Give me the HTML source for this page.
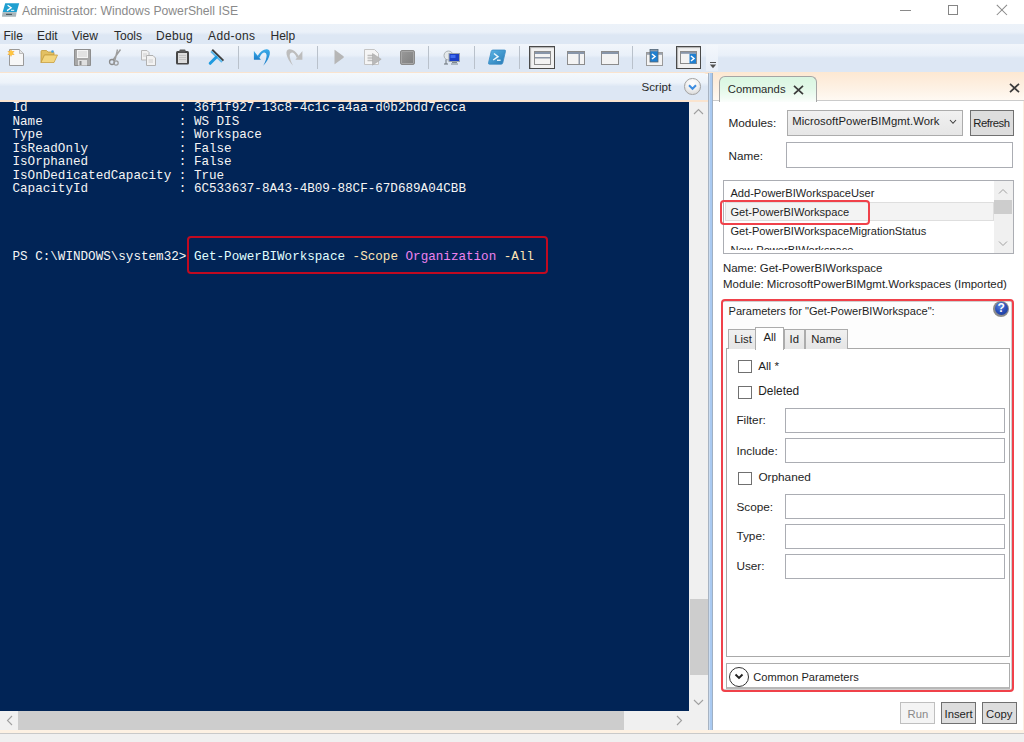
<!DOCTYPE html>
<html><head><meta charset="utf-8">
<style>
*{margin:0;padding:0;box-sizing:border-box}
html,body{width:1024px;height:742px;overflow:hidden;background:#fff;font-family:"Liberation Sans",sans-serif;font-size:11.3px;color:#1e1e1e}
.a{position:absolute}
.t{position:absolute;white-space:pre;line-height:1}
#title{left:0;top:0;width:1024px;height:24px;background:#fff}
#menu{left:0;top:24px;width:1024px;height:20px;background:linear-gradient(#ecf2f9 0,#ebf1f9 40%,#dde7f4 55%,#dde7f4 100%)}
#tool{left:0;top:44px;width:1024px;height:28px;background:linear-gradient(#f2f6fb 0,#e9f0f9 40%,#dde7f4 50%,#dde7f4 100%)}
#peach1{left:0;top:71.5px;width:713px;height:2px;background:#fae4cf}
#shdr{left:0;top:73px;width:707.5px;height:27px;background:linear-gradient(#f4f8fc 0,#edf3fa 35%,#dde7f4 50%,#dde7f4 100%);border-radius:0 5px 0 0}
#peach2{left:0;top:100px;width:708px;height:2px;background:#fae4cf}
#editor{left:0;top:101.5px;width:689px;height:609.5px;background:#012456;overflow:hidden}
.mono{font-family:"Liberation Mono",monospace;font-size:12.6px;color:#f5f5f5;white-space:pre;line-height:13.57px}
#vsb{left:689px;top:101.5px;width:19px;height:609.5px;background:#f0f0f0}
#hsb{left:0;top:711px;width:708px;height:18.5px;background:#f0f0f0}
#split{left:708px;top:73px;width:5px;height:657px;background:linear-gradient(90deg,#a7b3c2 0,#a7b3c2 20%,#c9dcf2 20%,#c9dcf2 45%,#a9c9f0 45%,#a9c9f0 80%,#9fb0c4 80%)}
#cmd{left:713px;top:72px;width:311px;height:658px;background:#fff}
#cmdhdr{left:713px;top:71.5px;width:311px;height:29px;background:linear-gradient(#fde8d2,#fdf1e4 55%,#fffaf4)}
#status{left:0;top:733px;width:1024px;height:9px;background:#f0f0f0;border-top:1px solid #c9c9c9}
#peach3{left:0;top:729.5px;width:1024px;height:3.5px;background:#fdf1e3}
.lbl{position:absolute;white-space:pre;line-height:1;font-size:11.4px;color:#1e1e1e}
.tb{position:absolute;background:#fff;border:1px solid #abadb3}
.cb{position:absolute;width:14px;height:13px;background:#fff;border:1px solid #707070}
</style></head><body>
<div id="title" class="a">
<svg class="a" style="left:0;top:0" width="22" height="20" viewBox="0 0 22 20">
<path d="M5.2 3.2 H19.2 L16.6 12.3 H2.6 Z" fill="#1f9fd0"/>
<path d="M2.6 12.3 H16.6 L15.9 16.7 H2.3 Q1.8 16.7 2.0 16.0 Z" fill="#a9b6bb"/>
<path d="M7.6 5.2 L11.2 7.8 L7.0 10.6" stroke="#fff" stroke-width="1.3" fill="none"/>
<rect x="11" y="9.8" width="3.2" height="1.2" fill="#cfeaf5"/>
<rect x="6" y="13.8" width="6" height="1.2" fill="#4d5a60"/>
</svg>
<div class="t" style="left:22px;top:5px;font-size:12.2px;color:#8a8a8a">Administrator: Windows PowerShell ISE</div>
<div class="a" style="left:900px;top:9.5px;width:11px;height:1px;background:#8a8a8a"></div>
<div class="a" style="left:948px;top:5px;width:10px;height:10px;border:1px solid #858585"></div>
<svg class="a" style="left:996px;top:4px" width="12" height="12" viewBox="0 0 12 12"><path d="M0.8 0.8 L11 11 M11 0.8 L0.8 11" stroke="#8a8a8a" stroke-width="1.05"/></svg>
</div>
<div id="menu" class="a">
<div class="t" style="left:3.5px;top:6px;font-size:12px;color:#2a2a2a">File</div>
<div class="t" style="left:37px;top:6px;font-size:12px;color:#2a2a2a">Edit</div>
<div class="t" style="left:72px;top:6px;font-size:12px;color:#2a2a2a">View</div>
<div class="t" style="left:114px;top:6px;font-size:12px;color:#2a2a2a">Tools</div>
<div class="t" style="left:156px;top:6px;font-size:12px;color:#2a2a2a;letter-spacing:0.3px">Debug</div>
<div class="t" style="left:208px;top:6px;font-size:12px;color:#2a2a2a;letter-spacing:0.4px">Add-ons</div>
<div class="t" style="left:270.5px;top:6px;font-size:12px;color:#2a2a2a">Help</div>
</div>
<div id="tool" class="a">
<!-- new -->
<svg class="a" style="left:6px;top:4px" width="20" height="19" viewBox="0 0 20 19">
<path d="M3.5 1.5 H13.5 L17.5 5.5 V17.5 H3.5 Z" fill="#f7f7f7" stroke="#9a9a9a" stroke-width="1"/>
<path d="M13.5 1.5 V5.5 H17.5" fill="#e6e6e6" stroke="#b0b0b0" stroke-width="0.8"/>
<path d="M5 1 L5.9 3.6 L8.6 2.9 L6.9 5 L8.6 7.1 L5.9 6.4 L5 9 L4.1 6.4 L1.4 7.1 L3.1 5 L1.4 2.9 L4.1 3.6 Z" fill="#f5a623"/>
<circle cx="5" cy="5" r="2.2" fill="#ffc640"/>
</svg>
<!-- open -->
<svg class="a" style="left:40px;top:5px" width="19" height="15" viewBox="0 0 19 15">
<path d="M1 2.5 Q1 1.5 2 1.5 H6.5 L8 3 H13 Q14 3 14 4 V6 H4.5 L1 13.5 Z" fill="#e2c063" stroke="#c49a38" stroke-width="0.8"/>
<path d="M4.5 6 H17.5 L14 13.5 H1 Z" fill="#f2d57e" stroke="#c9a040" stroke-width="0.8"/>
<circle cx="12.5" cy="2.5" r="1.3" fill="#4aa0e0"/>
</svg>
<!-- save -->
<svg class="a" style="left:74px;top:5px" width="17" height="17" viewBox="0 0 17 17">
<path d="M0.5 0.5 H16.5 V16.5 H0.5 Z" fill="#a8a8a8" stroke="#8e8e8e" stroke-width="1"/>
<rect x="3" y="1" width="11" height="8" fill="#f4f4f4"/>
<path d="M4 3 H13 M4 5 H13 M4 7 H13" stroke="#c8c8c8" stroke-width="0.8"/>
<rect x="4" y="11" width="9" height="5.5" fill="#e0e0e0"/>
<rect x="5.5" y="12" width="2" height="4" fill="#8a8a8a"/>
</svg>
<!-- cut -->
<svg class="a" style="left:108px;top:5px" width="14" height="17" viewBox="0 0 14 17">
<path d="M12.5 0.5 L5 11 M9.5 0.5 L7 11" stroke="#9c9c9c" stroke-width="1.4" fill="none"/>
<circle cx="4" cy="13" r="2.5" fill="none" stroke="#8a8a8a" stroke-width="1.3"/>
<circle cx="8" cy="14" r="2.2" fill="none" stroke="#9a9a9a" stroke-width="1.2"/>
</svg>
<!-- copy -->
<svg class="a" style="left:141px;top:6px" width="16" height="16" viewBox="0 0 16 16">
<path d="M0.5 0.5 H6 L8 2.5 V10 H0.5 Z" fill="#f2f2f2" stroke="#b8b8b8" stroke-width="1"/>
<path d="M5.5 5.5 H12 L14.5 8 V15.5 H5.5 Z" fill="#f2f2f2" stroke="#b0b0b0" stroke-width="1"/>
<path d="M2 4 H6 M2 6 H6 M7.5 10 H12 M7.5 12 H12" stroke="#c4c4c4" stroke-width="0.8"/>
</svg>
<!-- paste -->
<svg class="a" style="left:175px;top:5px" width="15" height="16" viewBox="0 0 15 16">
<rect x="1" y="2" width="13" height="13.5" rx="1.5" fill="#474747"/>
<rect x="3" y="4" width="9" height="10" fill="#dcdcdc"/>
<path d="M4 6.5 H11 M4 8.5 H11 M4 10.5 H11" stroke="#bdbdbd" stroke-width="0.8"/>
<rect x="4.5" y="0.5" width="6" height="3" rx="0.8" fill="#5a5a5a"/>
</svg>
<!-- clear -->
<svg class="a" style="left:207px;top:4px" width="18" height="18" viewBox="0 0 18 18">
<path d="M5.2 1.8 L16.4 12.6" stroke="#404040" stroke-width="2"/>
<path d="M4 3.4 L15 14" stroke="#5db8ea" stroke-width="2"/>
<path d="M9.2 9.2 L3.2 15.3" stroke="#1f9be0" stroke-width="3" stroke-linecap="round"/>
</svg>
<div class="a" style="left:238px;top:2px;width:1px;height:23px;background:#b9c1cb"></div>
<!-- undo -->
<svg class="a" style="left:248px;top:0" width="60" height="26" viewBox="0 0 60 26">
<defs><linearGradient id="ug" x1="0" y1="0" x2="0" y2="1"><stop offset="0" stop-color="#3aaae8"/><stop offset="1" stop-color="#1a7cc8"/></linearGradient></defs>
<path d="M5.9 7 L5.9 15.8 L12.9 15.8 Z" fill="url(#ug)"/>
<path d="M9.3 12.2 Q14 4.8 19 5.2 Q22.6 5.6 21.7 10.5 Q20.6 16 15.2 21.8 Q18.8 15 18.6 11 Q18.4 8.3 16 8.5 Q13.5 8.8 11.6 13.8 Z" fill="url(#ug)"/>
<g transform="translate(60.3,0) scale(-1,1)" fill="#bdbdbd">
<path d="M5.9 7 L5.9 15.8 L12.9 15.8 Z"/>
<path d="M9.3 12.2 Q14 4.8 19 5.2 Q22.6 5.6 21.7 10.5 Q20.6 16 15.2 21.8 Q18.8 15 18.6 11 Q18.4 8.3 16 8.5 Q13.5 8.8 11.6 13.8 Z"/>
</g>
</svg>
<div class="a" style="left:316.5px;top:2px;width:1px;height:23px;background:#b9c1cb"></div>
<!-- run -->
<svg class="a" style="left:333px;top:5px" width="12" height="16" viewBox="0 0 12 16">
<path d="M1.5 1 Q1 0.5 2 1 L10.5 7.2 Q11.2 8 10.5 8.8 L2 15 Q1 15.5 1.5 15 Z" fill="#b6b6b6"/>
</svg>
<!-- run selection -->
<svg class="a" style="left:364px;top:5px" width="18" height="17" viewBox="0 0 18 17">
<path d="M0.5 0.5 H10.5 L14.5 4.5 V15.5 H0.5 Z" fill="#f5f5f5" stroke="#c4c4c4" stroke-width="1"/>
<path d="M3.5 6.5 H11 M3.5 9 H11 M3.5 11.5 H11" stroke="#bdbdbd" stroke-width="1.3"/>
<path d="M8.5 4.5 L17.2 10.2 L8.5 16.2 Z" fill="#b9b9b9" stroke="#a9a9a9" stroke-width="0.6"/>
</svg>
<!-- stop -->
<div class="a" style="left:400px;top:6px;width:15px;height:15px;background:linear-gradient(135deg,#9a9a9a,#7f7f7f);border:1px solid #8a8a8a;border-radius:2px;box-shadow:inset 0 0 0 1px #a6a6a6"></div>
<div class="a" style="left:428px;top:2px;width:1px;height:23px;background:#b9c1cb"></div>
<!-- remote -->
<svg class="a" style="left:443px;top:6px" width="18" height="15" viewBox="0 0 18 15">
<circle cx="5.5" cy="5.5" r="4.5" fill="#e4e8ea" stroke="#a8b0b4" stroke-width="1"/>
<rect x="6" y="3.5" width="10.5" height="8" fill="#1b3fc6" stroke="#9aa3aa" stroke-width="1"/>
<rect x="7.5" y="5" width="5" height="3" fill="#3f6cf0"/>
<path d="M9 12.5 H14 M8 14 H15" stroke="#7d8890" stroke-width="1"/>
<path d="M3 9.5 V14 M1 14 H5" stroke="#6b7278" stroke-width="1"/>
</svg>
<div class="a" style="left:474px;top:2px;width:1px;height:23px;background:#b9c1cb"></div>
<!-- ps -->
<svg class="a" style="left:487px;top:4px" width="20" height="18" viewBox="0 0 20 18">
<defs><linearGradient id="psg" x1="0" y1="0" x2="1" y2="1"><stop offset="0" stop-color="#5cb6e6"/><stop offset="1" stop-color="#2679b5"/></linearGradient></defs>
<path d="M6 2 H17.5 Q18.8 2 18.5 3.3 L15.8 14.8 Q15.5 16.2 14.2 16.2 H2.5 Q1.2 16.2 1.5 14.9 L4.2 3.4 Q4.5 2 6 2 Z" fill="url(#psg)" stroke="#3b8cc4" stroke-width="0.8"/>
<path d="M7 5.5 L11 8.7 L6.2 12" stroke="#eaf6fc" stroke-width="1.5" fill="none"/>
<rect x="10" y="11.6" width="3.6" height="1.3" fill="#eaf6fc"/>
</svg>
<div class="a" style="left:519px;top:2px;width:1px;height:23px;background:#b9c1cb"></div>
<!-- layout 1 selected -->
<div class="a" style="left:529px;top:2px;width:26px;height:23px;background:#f1f1f1;border:1px solid #4a4a4a;box-shadow:inset 1px 1px 1px #b0b0b0"></div>
<svg class="a" style="left:534px;top:7px" width="17" height="14" viewBox="0 0 17 14">
<rect x="0.5" y="0.5" width="16" height="13" fill="#f3f3f3" stroke="#8c8c8c" stroke-width="1"/>
<rect x="1" y="1" width="15" height="2" fill="#8896aa"/>
<rect x="1" y="6" width="15" height="1.5" fill="#8c96a6"/>
</svg>
<svg class="a" style="left:567px;top:7px" width="18" height="14" viewBox="0 0 18 14">
<rect x="0.5" y="0.5" width="17" height="13" fill="#f3f3f3" stroke="#8c8c8c" stroke-width="1"/>
<rect x="1" y="1" width="16" height="2" fill="#8896aa"/>
<rect x="11.5" y="1" width="1.5" height="12" fill="#8c96a6"/>
</svg>
<svg class="a" style="left:601px;top:7px" width="18" height="14" viewBox="0 0 18 14">
<rect x="0.5" y="0.5" width="17" height="13" fill="#f3f3f3" stroke="#8c8c8c" stroke-width="1"/>
<rect x="1" y="1" width="16" height="2" fill="#8896aa"/>
</svg>
<div class="a" style="left:632px;top:2px;width:1px;height:23px;background:#b9c1cb"></div>
<svg class="a" style="left:646px;top:5px" width="18" height="17" viewBox="0 0 18 17">
<rect x="0.5" y="3.5" width="16" height="13" fill="#f3f3f3" stroke="#9a9a9a" stroke-width="1"/>
<rect x="1" y="4" width="15" height="1.8" fill="#9aa2ae"/>
<rect x="4" y="0.5" width="8" height="12.5" fill="#1f7fd0" stroke="#566470" stroke-width="0.8"/>
<rect x="4.4" y="0.9" width="7.2" height="1.5" fill="#8a97a6"/>
<path d="M6 5 L9 7.5 L6 10" stroke="#fff" stroke-width="1.5" fill="none"/>
</svg>
<div class="a" style="left:676px;top:2px;width:25px;height:23px;background:#f1f1f1;border:1px solid #4a4a4a;box-shadow:inset 1px 1px 1px #b0b0b0"></div>
<svg class="a" style="left:680px;top:7px" width="17" height="13" viewBox="0 0 17 13">
<rect x="0.5" y="0.5" width="16" height="12" fill="#f3f3f3" stroke="#8c8c8c" stroke-width="1"/>
<rect x="1" y="1" width="15" height="1.8" fill="#8896aa"/>
<rect x="9.5" y="2.8" width="6.5" height="9.7" fill="#1f7fd0"/>
<path d="M11 5 L14 7.5 L11 10" stroke="#fff" stroke-width="1.5" fill="none"/>
</svg>
<div class="a" style="left:706px;top:1px;width:12px;height:26px;background:linear-gradient(#f3f7fc,#e7eef8)"></div>
<div class="a" style="left:710px;top:18px;width:6px;height:1px;background:#505050"></div>
<svg class="a" style="left:709px;top:20px" width="8" height="5" viewBox="0 0 8 5"><path d="M0.8 0.5 H7.2 L4 4.3 Z" fill="#505050"/></svg>
</div>
<div id="peach1" class="a"></div>
<div id="shdr" class="a"></div>
<div id="peach2" class="a"></div>
<div id="editor" class="a">
<div class="mono a" style="left:12.5px;top:0.5px">Id                    : 36f1f927-13c8-4c1c-a4aa-d0b2bdd7ecca
Name                  : WS DIS
Type                  : Workspace
IsReadOnly            : False
IsOrphaned            : False
IsOnDedicatedCapacity : True
CapacityId            : 6C533637-8A43-4B09-88CF-67D689A04CBB




PS C:\WINDOWS\system32&gt; <span style="color:#e0ffff">Get-PowerBIWorkspace</span> <span style="color:#ffe4b5">-Scope</span> <span style="color:#ee82ee">Organization</span> <span style="color:#ffe4b5">-All</span></div>
</div>
<div class="a" style="left:187px;top:236.3px;width:360.5px;height:37.5px;border:2px solid #c00a20;border-radius:4px"></div>
<div id="vsb" class="a"></div>
<div id="hsb" class="a"></div>
<div id="peach3" class="a"></div>
<div id="split" class="a"></div>
<div id="cmd" class="a"></div>
<div id="cmdhdr" class="a"></div>
<div class="a" style="left:1023px;top:100px;width:1px;height:630px;background:#fdeedf"></div>
<div id="status" class="a"></div>
<!--CMD-->
<div class="lbl" style="left:641.5px;top:81.38px;font-size:11.6px;color:#2a2a2a">Script</div>
<div class="a" style="left:684px;top:78.3px;width:16.5px;height:16.5px;border-radius:50%;background:radial-gradient(circle at 50% 30%,#ffffff 0,#f2f2f2 45%,#d0d0d0 100%);border:1px solid #a3a3a3"></div>
<svg class="a" style="left:687px;top:82.5px" width="11" height="9" viewBox="0 0 11 9"><path d="M2 2.3 L5.5 5.8 L9 2.3" stroke="#3d8de0" stroke-width="2" fill="none"/></svg>
<svg class="a" style="left:693px;top:108px" width="11" height="7" viewBox="0 0 11 7"><path d="M1 6 L5.5 1.5 L10 6" stroke="#a0a0a0" stroke-width="1.1" fill="none"/></svg>
<div class="a" style="left:689.5px;top:598.5px;width:18px;height:76.5px;background:#cdcdcd"></div>
<svg class="a" style="left:693px;top:699px" width="11" height="7" viewBox="0 0 11 7"><path d="M1 1 L5.5 5.5 L10 1" stroke="#a0a0a0" stroke-width="1.1" fill="none"/></svg>
<div class="a" style="left:18px;top:711px;width:606px;height:18.5px;background:#cdcdcd"></div>
<svg class="a" style="left:6px;top:715px" width="7" height="11" viewBox="0 0 7 11"><path d="M6 1 L1.5 5.5 L6 10" stroke="#a0a0a0" stroke-width="1.1" fill="none"/></svg>
<svg class="a" style="left:676px;top:715px" width="7" height="11" viewBox="0 0 7 11"><path d="M1 1 L5.5 5.5 L1 10" stroke="#a0a0a0" stroke-width="1.1" fill="none"/></svg>
<div class="a" style="left:713px;top:99.5px;width:311px;height:1.5px;background:#cbcbcb"></div>
<div class="a" style="left:718.5px;top:75.5px;width:98.5px;height:26px;border:1px solid #a5a5a5;border-bottom:none;border-radius:6px 6px 0 0;background:linear-gradient(#d9f6e1 0,#e2f8e8 45%,#f3fcf5 85%,#fbfefc 100%)"></div>
<div class="lbl" style="left:727.8px;top:84.43px;font-size:11.3px;color:#2a2a2a">Commands</div>
<svg class="a" style="left:793px;top:85px" width="11" height="10" viewBox="0 0 11 10"><path d="M1 0.8 L10 9.2 M10 0.8 L1 9.2" stroke="#3a3a3a" stroke-width="1.7"/></svg>
<svg class="a" style="left:1009px;top:82.5px" width="11" height="10" viewBox="0 0 11 10"><path d="M1 0.8 L10 9.2 M10 0.8 L1 9.2" stroke="#3a3a3a" stroke-width="1.7"/></svg>
<div class="lbl" style="left:728.4px;top:117.51px;font-size:11.8px">Modules:</div>
<div class="a" style="left:786.5px;top:110.2px;width:176.5px;height:25.5px;border:1px solid #acacac;background:linear-gradient(#f1f1f1,#e6e6e6)"></div>
<div class="lbl" style="left:792.2px;top:116.43px;font-size:11.3px;letter-spacing:0.05px">MicrosoftPowerBIMgmt.Work</div>
<svg class="a" style="left:949px;top:119px" width="8" height="6" viewBox="0 0 8 6"><path d="M1 1 L4 4.3 L7 1" stroke="#404040" stroke-width="1.1" fill="none"/></svg>
<div class="a" style="left:970px;top:110.2px;width:43.5px;height:25.5px;border:1px solid #707070;background:#dddddd"></div>
<div class="lbl" style="left:973.2px;top:118.43px;font-size:11.3px;letter-spacing:-0.45px">Refresh</div>
<div class="lbl" style="left:728.5px;top:149.80px;font-size:11.7px">Name:</div>
<div class="tb" style="left:786.3px;top:142.3px;width:227.2px;height:25.3px"></div>
<div class="a" style="left:723px;top:180.3px;width:290.5px;height:73.3px;border:1px solid #abadb3;background:#fff;overflow:hidden"></div>
<div class="a" style="left:725px;top:201.5px;width:269px;height:19px;background:#f3f3f3;border:1px solid #dedede"></div>
<div class="a" style="left:724px;top:181.3px;width:288.5px;height:68.6px;overflow:hidden"><div class="lbl" style="left:6.4px;top:6.40px;font-size:11.1px">Add-PowerBIWorkspaceUser</div><div class="lbl" style="left:6.4px;top:25.80px;font-size:11.1px">Get-PowerBIWorkspace</div><div class="lbl" style="left:6.4px;top:45.00px;font-size:11.1px">Get-PowerBIWorkspaceMigrationStatus</div><div class="lbl" style="left:6.4px;top:64.20px;font-size:11.1px">New-PowerBIWorkspace</div></div>
<div class="a" style="left:994px;top:181.3px;width:18.5px;height:71.3px;background:#f0f0f0"></div>
<div class="a" style="left:994px;top:200px;width:17.5px;height:14.2px;background:#cdcdcd"></div>
<svg class="a" style="left:998px;top:188px" width="10" height="7" viewBox="0 0 10 7"><path d="M1 5.5 L5 1.5 L9 5.5" stroke="#a0a0a0" stroke-width="1" fill="none"/></svg>
<svg class="a" style="left:998px;top:240px" width="10" height="7" viewBox="0 0 10 7"><path d="M1 1.5 L5 5.5 L9 1.5" stroke="#a0a0a0" stroke-width="1" fill="none"/></svg>
<div class="a" style="left:720.3px;top:199.8px;width:149.7px;height:24.9px;border:2px solid #f0414a;border-radius:4px"></div>
<div class="lbl" style="left:723px;top:263.31px;font-size:11.45px">Name: Get-PowerBIWorkspace</div>
<div class="lbl" style="left:723px;top:278.61px;font-size:11.45px">Module: MicrosoftPowerBIMgmt.Workspaces (Imported)</div>
<div class="a" style="left:722px;top:301px;width:290px;height:389px;border:1px solid #d0d0d0;background:#fdfdfd"></div>
<div class="lbl" style="left:728.5px;top:305.90px;font-size:11.1px">Parameters for &quot;Get-PowerBIWorkspace&quot;:</div>
<div class="a" style="left:993px;top:300.8px;width:16px;height:16px;border-radius:50%;background:#8c8c8c"></div>
<div class="a" style="left:994.5px;top:302.3px;width:13px;height:13px;border-radius:50%;background:radial-gradient(circle at 40% 30%,#5a86e0 0,#2a4fb8 50%,#1a3590 100%)"></div>
<div class="lbl" style="left:997.5px;top:302.3px;font-size:12px;font-weight:bold;color:#fff">?</div>
<div class="a" style="left:726.4px;top:348.3px;width:283.6px;height:309px;border:1px solid #a9a9a9;background:#fff"></div>
<div class="a" style="left:728.2px;top:329px;width:27.5px;height:20px;border:1px solid #acacac;border-bottom:none;background:linear-gradient(#f0f0f0,#e5e5e5)"></div>
<div class="a" style="left:784px;top:329px;width:21px;height:20px;border:1px solid #acacac;border-bottom:none;background:linear-gradient(#f0f0f0,#e5e5e5)"></div>
<div class="a" style="left:805px;top:329px;width:42.6px;height:20px;border:1px solid #acacac;border-bottom:none;background:linear-gradient(#f0f0f0,#e5e5e5)"></div>
<div class="a" style="left:755.3px;top:326.5px;width:29px;height:23px;border:1px solid #acacac;border-bottom:none;background:#fff"></div>
<div class="lbl" style="left:734.3px;top:333.53px;font-size:11.3px">List</div>
<div class="lbl" style="left:763.5px;top:332.13px;font-size:11.3px">All</div>
<div class="lbl" style="left:789.5px;top:333.53px;font-size:11.3px">Id</div>
<div class="lbl" style="left:811.2px;top:333.53px;font-size:11.3px">Name</div>
<div class="cb" style="left:738.4px;top:359.5px"></div>
<div class="lbl" style="left:758.2px;top:360.30px;font-size:11.7px">All *</div>
<div class="cb" style="left:738.4px;top:385.5px"></div>
<div class="lbl" style="left:758.2px;top:386.13px;font-size:11.9px">Deleted</div>
<div class="lbl" style="left:736.4px;top:415.41px;font-size:11.8px">Filter:</div>
<div class="tb" style="left:785px;top:407.5px;width:220px;height:25px"></div>
<div class="lbl" style="left:736.4px;top:445.71px;font-size:11.8px">Include:</div>
<div class="tb" style="left:785px;top:438.2px;width:220px;height:25px"></div>
<div class="lbl" style="left:736.4px;top:501.81px;font-size:11.8px">Scope:</div>
<div class="tb" style="left:785px;top:493.8px;width:220px;height:25px"></div>
<div class="lbl" style="left:736.4px;top:531.41px;font-size:11.8px">Type:</div>
<div class="tb" style="left:785px;top:523.7px;width:220px;height:25px"></div>
<div class="lbl" style="left:736.4px;top:561.01px;font-size:11.8px">User:</div>
<div class="tb" style="left:785px;top:554px;width:220px;height:25px"></div>
<div class="cb" style="left:738.1px;top:471.6px"></div>
<div class="lbl" style="left:758.4px;top:471.51px;font-size:11.8px">Orphaned</div>
<div class="a" style="left:726px;top:663.4px;width:284px;height:25.8px;border:1px solid #acacac;border-bottom:2px solid #b8b8b8;background:#fff"></div>
<div class="a" style="left:728.8px;top:666.6px;width:20px;height:20px;border-radius:50%;border:1.4px solid #333;background:#fff"></div>
<svg class="a" style="left:734px;top:673px" width="10" height="7" viewBox="0 0 10 7"><path d="M1.5 1.5 L5 5 L8.5 1.5" stroke="#222" stroke-width="1.9" fill="none"/></svg>
<div class="lbl" style="left:753.3px;top:671.90px;font-size:11.1px">Common Parameters</div>
<div class="a" style="left:720.6px;top:299.3px;width:293.3px;height:392.3px;border:2px solid #f0414a;border-radius:4px"></div>
<div class="a" style="left:900.2px;top:702px;width:35px;height:21.8px;border:1px solid #bfbfbf;background:#f4f4f4"></div>
<div class="lbl" style="left:907.5px;top:708.93px;font-size:11.3px;color:#8a8a8a">Run</div>
<div class="a" style="left:941.3px;top:702px;width:34.7px;height:21.8px;border:1px solid #707070;background:#dddddd"></div>
<div class="lbl" style="left:944.5px;top:708.93px;font-size:11.3px">Insert</div>
<div class="a" style="left:982px;top:702px;width:35px;height:21.8px;border:1px solid #707070;background:#dddddd"></div>
<div class="lbl" style="left:986px;top:708.93px;font-size:11.3px">Copy</div>
<!--/CMD-->
</body></html>
